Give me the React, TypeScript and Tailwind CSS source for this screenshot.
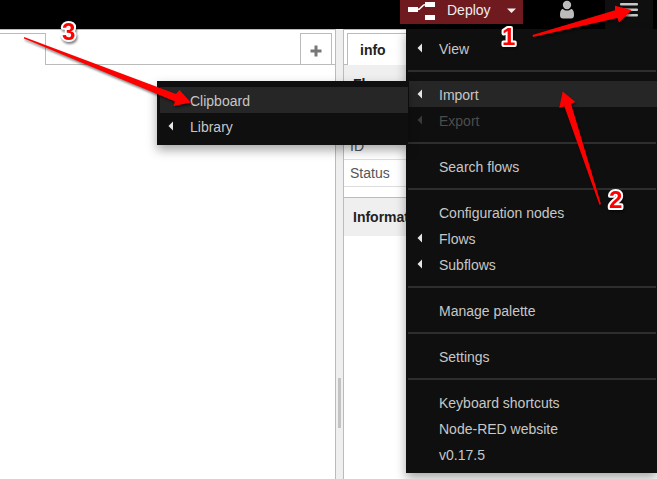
import React from "react";

type Item = { label: string; sub?: boolean; active?: boolean; disabled?: boolean };

const groups: Item[][] = [
  [{ label: "View", sub: true }],
  [
    { label: "Import", sub: true, active: true },
    { label: "Export", sub: true, disabled: true },
  ],
  [{ label: "Search flows" }],
  [{ label: "Configuration nodes" }, { label: "Flows", sub: true }, { label: "Subflows", sub: true }],
  [{ label: "Manage palette" }],
  [{ label: "Settings" }],
  [{ label: "Keyboard shortcuts" }, { label: "Node-RED website" }, { label: "v0.17.5" }],
];

const importItems: Item[] = [{ label: "Clipboard", active: true }, { label: "Library", sub: true }];

function MenuItem({ item }: { item: Item }) {
  return (
    <li>
      <button
        type="button"
        disabled={item.disabled}
        className={`flex h-[26px] w-full items-center pt-[2px] text-left ${item.active ? "bg-[#262626]" : ""} ${
          item.disabled ? "text-[#4c4c4c]" : "text-[#c7c7c7]"
        }`}
      >
        <span className={`flex w-[30px] shrink-0 pb-[2px] pl-2 ${item.disabled ? "text-[#3a3a3a]" : "text-[#e6e6e6]"}`}>
          {item.sub && (
            <svg width="6" height="10" viewBox="0 0 6 10" fill="currentColor" aria-hidden="true">
              <path d="M5 0.5V9.5L0.5 5Z" />
            </svg>
          )}
        </span>
        {item.label}
      </button>
    </li>
  );
}

function Header() {
  return (
    <header className="flex h-[29px] shrink-0 justify-end bg-black pr-1">
      <button type="button" className="mr-5 flex h-6 w-[123px] items-start bg-[#6e1a1f] pl-2 text-[#eeeeee]">
        <svg width="27" height="22" viewBox="0 0 27 22" aria-hidden="true">
          <path d="M9 9.5C14.500 9.500 12.500 4.500 18 4.500" fill="none" stroke="#fff" strokeWidth="1.500" />
          <path d="M0 7H10V12H0ZM17 2H27V7H17ZM17 15H27V20H17Z" fill="#fff" />
        </svg>
        <span className="ml-3 leading-5">Deploy</span>
        <svg className="ml-4 mt-2" width="9" height="5" viewBox="0 0 9 5" fill="currentColor" aria-hidden="true">
          <path d="M0 0.500H9L4.500 5Z" />
        </svg>
      </button>
      <button type="button" aria-label="User" className="mr-[14px] flex w-12 justify-center">
        <svg width="14" height="19" viewBox="0 0 14 19" fill="#bbbbbb" aria-hidden="true">
          <circle cx="7" cy="5" r="4.200" />
          <path d="M3 9C1 9 0 11.500 0 15C0 17.500 1 18.500 3 18.500H11C13 18.500 14 17.500 14 15C14 11.500 13 9 11 9C9 11 5 11 3 9Z" />
        </svg>
      </button>
      <button type="button" aria-label="Menu" className="flex w-12 justify-center bg-[#0f0f0f]">
        <svg width="18" height="18" viewBox="0 0 18 18" fill="#c7c7c7" aria-hidden="true">
          <rect y="3" width="18" height="2.500" rx="1" />
          <rect y="8.500" width="18" height="2.500" rx="1" />
          <rect y="14" width="18" height="2.500" rx="1" />
        </svg>
      </button>
    </header>
  );
}

function Workspace() {
  return (
    <main className="min-w-0 flex-1 border-t border-r border-[#bbbbbb] bg-white">
      <div className="flex h-[35px] pt-[3px]">
        <div className="w-[46px] border-t border-r border-[#bbbbbb]" />
        <div className="flex-1 border-b border-[#bbbbbb]" />
        <button
          type="button"
          aria-label="Add flow"
          className="flex w-8 items-center justify-center border border-[#bbbbbb] pt-1"
        >
          <svg width="12" height="12" viewBox="0 0 12 12" fill="#777777" aria-hidden="true">
            <path d="M4.500 0.500H7.500V4.500H11.500V7.500H7.500V11.500H4.500V7.500H0.500V4.500H4.500Z" />
          </svg>
        </button>
        <div className="w-[3px] border-b border-[#bbbbbb]" />
      </div>
    </main>
  );
}

function Sidebar() {
  return (
    <aside className="w-[314px] shrink-0 border-t border-l border-[#bbbbbb] bg-white text-[#555555]">
      <div className="flex h-[35px] pt-[3px]">
        <div className="w-[3px] border-b border-[#bbbbbb]" />
        <div className="flex w-[90px] items-center border-t border-l border-[#bbbbbb] pl-3 font-bold text-[#222222]">
          info
        </div>
        <div className="flex-1 border-b border-[#bbbbbb]" />
      </div>
      <h2 className="flex h-[38px] items-center bg-[#efefef] pl-[9px] font-bold text-[#222222]">Flow</h2>
      <table className="mt-[2px] w-full border-collapse">
        <tbody>
          {["Name", "ID", "Status"].map((name) => (
            <tr key={name} className="h-[27px] border-b border-[#dddddd]">
              <th scope="row" className="py-0 pl-[6px] text-left font-normal">
                {name}
              </th>
            </tr>
          ))}
        </tbody>
      </table>
      <h2 className="mt-[10px] flex h-[39px] items-center border-t border-[#bbbbbb] bg-[#efefef] pl-[9px] font-bold text-[#222222]">
        Information
      </h2>
    </aside>
  );
}

function Annotations() {
  return (
    <svg
      className="pointer-events-none absolute top-0 right-0 drop-shadow-[1px_2px_1px_rgba(0,0,0,0.5)]"
      width="657"
      height="479"
      viewBox="0 0 657 479"
      fill="#ff0000"
    >
      <path d="M24 37L176 94L179.500 90L191 102.500L173.500 106L175 101.500L24 38.500Z" />
      <path d="M532.500 35L615 10.300L615 5.700L631.500 10L619 22.500L617.300 18L533 37Z" />
      <path d="M601 204L571 103.700L575.500 102L562.700 91.500L559.300 108L564.300 106.300L599.500 205Z" />
      <g
        className="text-2xl font-bold"
        stroke="#ffffff"
        strokeWidth="4"
        strokeLinejoin="round"
        paintOrder="stroke"
      >
        <text x="62" y="40">3</text>
        <text x="502" y="45">1</text>
        <text x="609" y="208">2</text>
      </g>
    </svg>
  );
}

export default function App() {
  return (
    <div className="relative flex h-screen flex-col overflow-hidden bg-white font-['Helvetica_Neue',Helvetica,'Liberation_Sans',Arial,sans-serif] text-sm leading-5">
      <Header />
      <div className="flex min-h-0 flex-1">
        <Workspace />
        <div className="flex w-[7px] shrink-0 items-center justify-center bg-[#efefef] pt-[298px]">
          <div className="h-[50px] w-[3px] bg-[#c3c3c3]" />
        </div>
        <Sidebar />
      </div>

      <nav className="absolute top-[29px] right-0 w-[251px] bg-[#0f0f0f] py-[6px] pl-[3px] shadow-[0_5px_10px_rgba(0,0,0,0.35)]">
        {groups.map((group, i) => (
          <React.Fragment key={group[0].label}>
            {i > 0 && <hr className="my-[9px] mr-px -ml-px h-[2px] border-0 bg-[#2e2e2e]" />}
            <ul>
              {group.map((item) => (
                <MenuItem key={item.label} item={item} />
              ))}
            </ul>
          </React.Fragment>
        ))}
      </nav>
      <ul className="absolute top-[81px] right-[249px] w-[251px] border-l border-[#0f0f0f] bg-[#0f0f0f] py-[6px] pl-[2px] shadow-[0_5px_10px_rgba(0,0,0,0.35)]">
        {importItems.map((item) => (
          <MenuItem key={item.label} item={item} />
        ))}
      </ul>
      <Annotations />
    </div>
  );
}
